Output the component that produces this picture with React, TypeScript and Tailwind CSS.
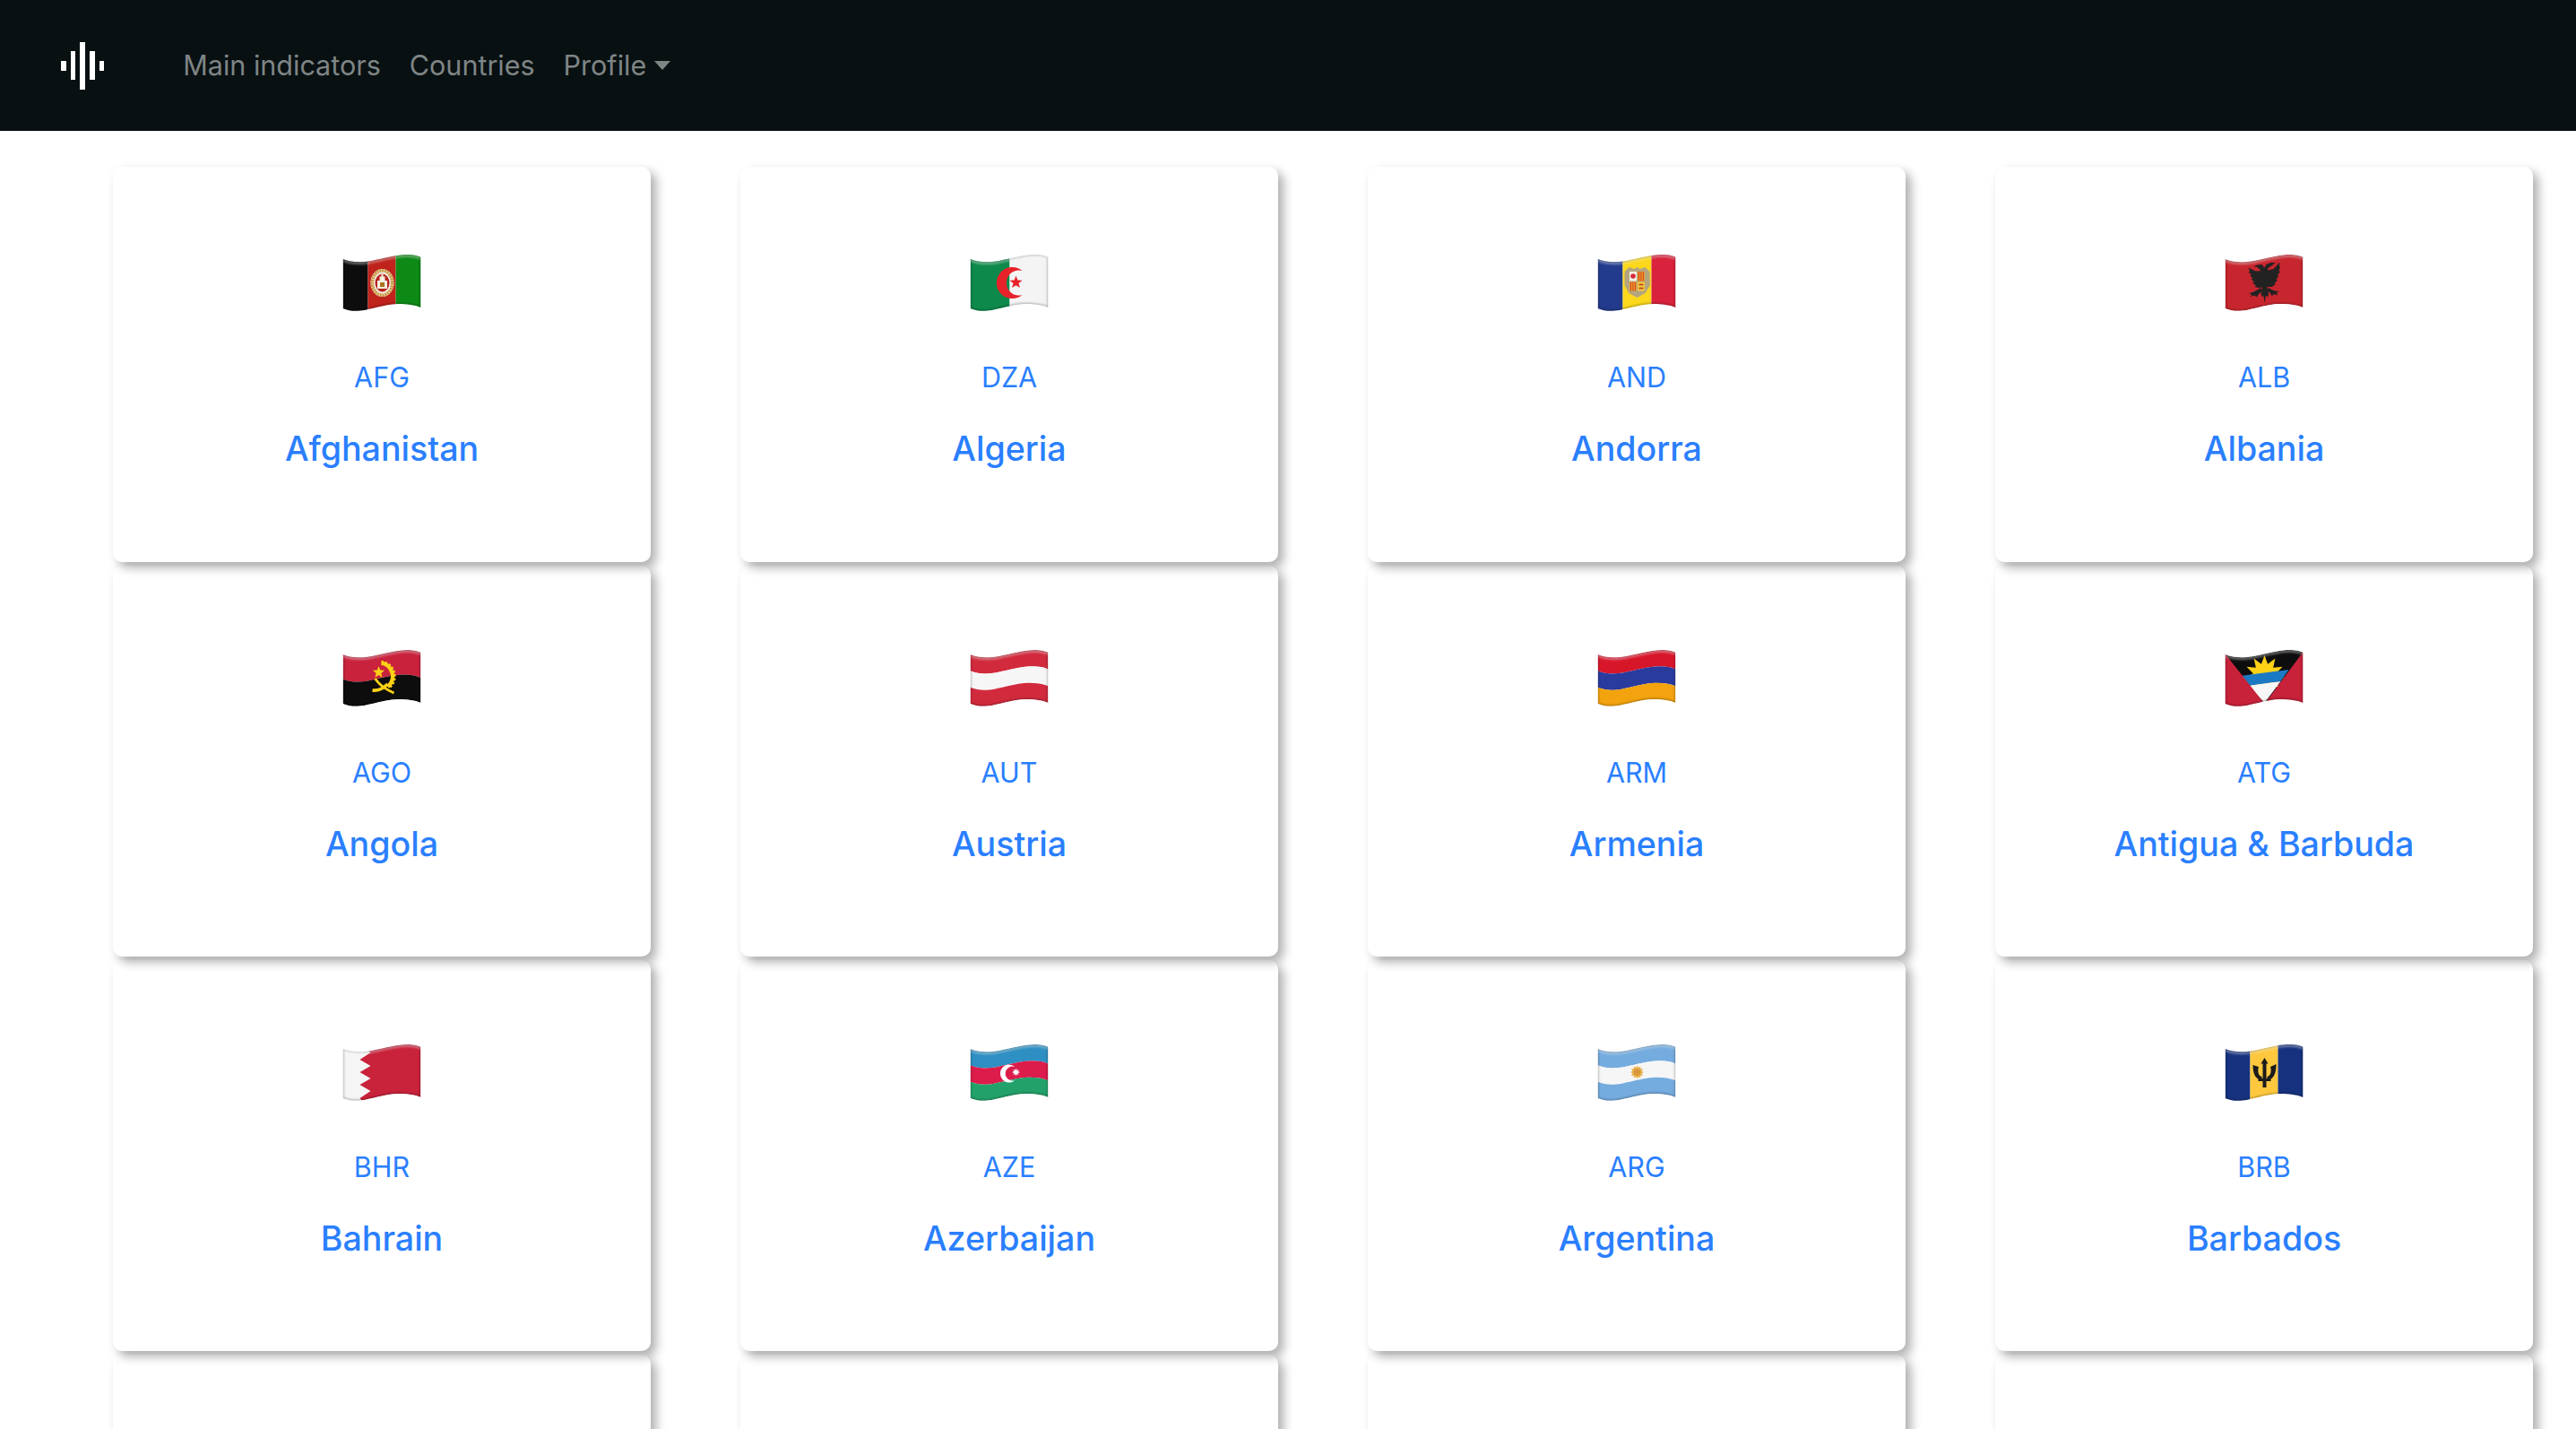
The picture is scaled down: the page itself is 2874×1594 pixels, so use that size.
import React from "react";

type P = [number, number];
const TOP: P[] = [[0,5],[10,9],[20,9],[32,7],[46,4],[60,0],[72,0],[78,0],[84,1],[87,3]];
const BOT: P[] = [[0,60],[8,63],[14,63.5],[24,62],[38,59],[50,55],[62,55],[72,55],[80,56],[87,59]];
const lerp = (t: number) => TOP.map((p, i) => [p[0] + (BOT[i][0] - p[0]) * t, p[1] + (BOT[i][1] - p[1]) * t] as P);
const fwd = (a: P[]) => `C${a[1]} ${a[2]} ${a[3]} C${a[4]} ${a[5]} ${a[6]} C${a[7]} ${a[8]} ${a[9]}`;
const band = (t0: number, t1: number) => {
  const a = lerp(t0);
  const b = lerp(t1).slice().reverse();
  return `M${a[0]} ${fwd(a)} L${b[0]} ${fwd(b)} Z`;
};
const OUTLINE = band(0, 1);

const star = (cx: number, cy: number, r: number, n = 5, inner = 0.42, rot = -90) => {
  const pts: string[] = [];
  for (let i = 0; i < n * 2; i++) {
    const rad = i % 2 ? r * inner : r;
    const a = ((rot + (i * 180) / n) * Math.PI) / 180;
    pts.push(`${(cx + rad * Math.cos(a)).toFixed(2)},${(cy + rad * Math.sin(a)).toFixed(2)}`);
  }
  return pts.join(" ");
};

const Bands = ({ colors, stops }: { colors: string[]; stops?: number[] }) => (
  <>
    {colors.map((c, i) => {
      const t0 = stops ? stops[i] : i / colors.length;
      const t1 = stops ? stops[i + 1] : (i + 1) / colors.length;
      return <path key={i} d={band(t0, t1)} fill={c} />;
    })}
  </>
);

const VBars = ({ bars }: { bars: [number, number, string][] }) => (
  <>
    {bars.map(([x, w, c], i) => (
      <rect key={i} x={x} y={-2} width={w} height={70} fill={c} />
    ))}
  </>
);

const art: Record<string, React.ReactNode> = {
  AFG: (
    <>
      <VBars bars={[[0, 28, "#0b0b0b"], [28, 31, "#c0201f"], [59, 30, "#0a8a12"]]} />
      <ellipse cx="44" cy="31.5" rx="13" ry="15.5" fill="#f3efe6" />
      <ellipse cx="44" cy="31.5" rx="11.2" ry="13.7" fill="none" stroke="#c9973f" strokeWidth="3.6" strokeDasharray="2.2 0.7" />
      <ellipse cx="44" cy="31.5" rx="8" ry="10" fill="#b8221f" />
      <path d="M38.5 38 V29 H41 V24.5 H43 V22 H45 V24.5 H47 V29 H49.5 V38 Z" fill="#f6efe2" />
      <path d="M41.5 31 H46.5 V36 H41.5 Z" fill="#a9741f" />
    </>
  ),
  DZA: (
    <>
      <VBars bars={[[0, 44, "#118a4b"], [44, 45, "#f4f4f4"]]} />
      <path d="M58 18 A17.5 17.5 0 1 0 58 45 A14 14 0 1 1 58 18Z" fill="#e8222a" />
      <polygon points={star(51, 31, 7.5)} fill="#e8222a" />
    </>
  ),
  AND: (
    <>
      <VBars bars={[[0, 28, "#223a8c"], [28, 32, "#fbd81e"], [60, 29, "#d9213a"]]} />
      <path d="M30 19 L35 14 L41 16 L44 14 L47 16 L53 14 L58 19 L58.5 34 L53 43 L44 48 L35 43 L30 34 Z" fill="#b3a57f" />
      <rect x="35.5" y="19" width="8" height="10.5" fill="#f5f1e6" />
      <circle cx="39.5" cy="24" r="2.8" fill="#d6293a" />
      <rect x="44.5" y="19" width="8" height="10.5" fill="#e9a125" />
      <path d="M46 19 V29.5 M48.4 19 V29.5 M50.8 19 V29.5" stroke="#d23a2c" strokeWidth="1" />
      <rect x="35.5" y="30.5" width="8" height="10" fill="#e9a125" />
      <path d="M37 30.5 V40.5 M39.4 30.5 V40.5 M41.8 30.5 V40.5" stroke="#d23a2c" strokeWidth="1" />
      <rect x="44.5" y="30.5" width="8" height="10" fill="#f1c83a" />
      <path d="M46 33.5 H51 M46 37.5 H51" stroke="#b8372c" strokeWidth="1.6" />
    </>
  ),
  ALB: (
    <>
      <path d={OUTLINE} fill="#c8262f" />
      <path
        d="M41 19 L36 14 L32 13.5 L36 11.5 L41 11 L44 14.5 L46 11 L51 9 L56 9 L52 12.5 L48 15 L47.5 20 L49 34 L46 38 L42 38 L39 34 Z"
        fill="#222"
      />
      <path
        d="M42 18 L34 18.5 L26 14.5 L27.5 18.5 L26 19.5 L29.5 22.5 L27.5 23.5 L31 26.5 L29 27.5 L32.5 30.5 L30.5 31.5 L34.5 34.5 L33 36 L38 37 L43 36 Z"
        fill="#222"
      />
      <path
        d="M46 18 L54 16 L61 8.5 L60.5 13 L61.5 14 L60 18 L61.5 19 L58.5 23 L60 24 L57 27.5 L58.5 28.5 L55 32 L56.5 33 L52 36 L46 36 Z"
        fill="#222"
      />
      <path d="M42 37 L40 43 L41 47 L43 46 L44 54 L45.5 46 L48 47 L48.5 43 L46.5 37 Z" fill="#222" />
      <path d="M40 37 L33 41 L26.5 43.5 L30 44.5 L28 47 L33 45.5 L35 47.5 L38 43.5 L42 40 Z M48 37 L54 40 L60.5 41.5 L57 43 L59 45.5 L54 44 L52.5 46.5 L50 42.5 L46 40 Z" fill="#222" />
    </>
  ),
  AGO: (
    <>
      <Bands colors={["#c9233c", "#0d0d0d"]} />
      <path d="M43 14.5 A 15 15 0 0 1 50 41" fill="none" stroke="#fcd116" strokeWidth="4.5" />
      <path d="M43 13 A 16.5 16.5 0 0 1 51.5 42.5" fill="none" stroke="#fcd116" strokeWidth="2.6" strokeDasharray="2.4 2" />
      <path d="M36 32 C40 38 48 44 57 48" fill="none" stroke="#fcd116" strokeWidth="2.8" />
      <path d="M33 45 C40 46 46 42 50 38" fill="none" stroke="#fcd116" strokeWidth="3.6" />
      <polygon points={star(40, 25, 7)} fill="#fcd116" />
    </>
  ),
  AUT: <Bands colors={["#d22a3d", "#f6f6f6", "#d22a3d"]} />,
  ARM: <Bands colors={["#d8152b", "#2a3a9e", "#f3a30f"]} />,
  ATG: (
    <>
      <path d={OUTLINE} fill="#0e0e0e" />
      <polygon points={star(44, 28, 22, 11, 0.58)} fill="#fcd116" />
      <polygon points="17,29 71,22 62,35 26,40" fill="#1a7ac4" />
      <polygon points="26,40 62,35 44,59" fill="#f7f7f7" />
      <polygon points="-1,3 44,60 24,66 -1,66" fill="#c8203a" />
      <polygon points="88,1 44,60 88,66" fill="#c8203a" />
    </>
  ),
  BHR: (
    <>
      <path d={OUTLINE} fill="#c9203a" />
      <path d="M-1 0 H19 L31 9 L19 17 L31 24 L19 31 L31 38 L19 45 L31 52 L19 60 L24 66 H-1 Z" fill="#f5f5f5" />
    </>
  ),
  AZE: (
    <>
      <Bands colors={["#2e8fc2", "#dc1c4b", "#21a26b"]} />
      <path d="M50 25 A10 10 0 1 0 50 40 A8 8 0 1 1 50 25Z" fill="#fff" />
      <polygon points={star(51, 31, 4.6, 8, 0.5)} fill="#fff" />
    </>
  ),
  ARG: (
    <>
      <Bands colors={["#74acdf", "#f6f6f6", "#74acdf"]} />
      <polygon points={star(44, 31, 7.5, 12, 0.7)} fill="#e8b04a" />
      <circle cx="44" cy="31" r="3.8" fill="#d9963a" />
    </>
  ),
  BRB: (
    <>
      <VBars bars={[[0, 28, "#13307f"], [28, 31, "#fdc83e"], [59, 30, "#13307f"]]} />
      <path d="M44 15 L48 21.5 H46 V48 H42 V21.5 H40 Z" fill="#1a1a1a" />
      <path d="M31 23 C31 33 34 39 41 40 V36 C37 35 36 30 37.5 25 Z M57 22 C57 33 54 39 47 40 V36 C51 35 52 30 50.5 25 Z" fill="#1a1a1a" />
      <rect x="37" y="38" width="14" height="3" fill="#1a1a1a" />
    </>
  ),
};

const Flag = ({ code }: { code: string }) => (
  <svg width="89" height="65" viewBox="0 0 88 65" className="block">
    <defs>
      <clipPath id={`c-${code}`}>
        <path d={OUTLINE} />
      </clipPath>
      <filter id={`b-${code}`} x="-10%" y="-10%" width="120%" height="120%">
        <feGaussianBlur stdDeviation="0.9" />
      </filter>
      <filter id={`s-${code}`} x="-5%" y="-5%" width="110%" height="110%">
        <feGaussianBlur stdDeviation="0.3" />
      </filter>
    </defs>
    <g clipPath={`url(#c-${code})`}>
      <g filter={`url(#s-${code})`}>{art[code]}</g>
      <path d={OUTLINE} fill="none" stroke="#000" strokeOpacity="0.28" strokeWidth="2.4" filter={`url(#b-${code})`} />
      <path d={band(0, 0.05)} fill="#fff" fillOpacity="0.4" filter={`url(#b-${code})`} />
    </g>
  </svg>
);

const countries = [
  ["AFG", "Afghanistan"],
  ["DZA", "Algeria"],
  ["AND", "Andorra"],
  ["ALB", "Albania"],
  ["AGO", "Angola"],
  ["AUT", "Austria"],
  ["ARM", "Armenia"],
  ["ATG", "Antigua & Barbuda"],
  ["BHR", "Bahrain"],
  ["AZE", "Azerbaijan"],
  ["ARG", "Argentina"],
  ["BRB", "Barbados"],
];

const Card = ({ code, name, first }: { code: string; name: string; first: boolean }) => (
  <div
    className={`flex flex-col items-center rounded-[10px] shadow-[6px_6px_12px_rgba(0,0,0,0.32)] ${
      first ? "h-[441px] pt-[98px]" : "h-[436px] pt-[94px]"
    }`}
  >
    <Flag code={code} />
    <div className="mt-[52px] text-[30.5px] leading-[40px] text-[#2a7fff]">{code}</div>
    <div className="mt-[36px] text-[37.6px] font-[450] leading-[48px] text-[#2a7fff]">{name}</div>
  </div>
);

const bars = ["h-[11px]", "h-[32px]", "h-[53px]", "h-[32px]", "h-[11px]"];

export default function App() {
  return (
    <div className="h-screen overflow-hidden bg-white font-['Inter',sans-serif]">
      <nav className="flex h-[146px] items-center bg-[#081012] pl-[68px]">
        <div className="flex items-center gap-[5.2px]">
          {bars.map((h, i) => (
            <div key={i} className={`w-[5.5px] bg-white ${h}`} />
          ))}
        </div>
        <div className="ml-[88px] flex items-center gap-[32px] text-[30.5px] leading-[44px] text-[#7f8585]">
          <a>Main indicators</a>
          <a>Countries</a>
          <a className="flex items-center gap-[9px]">
            Profile
            <span className="block border-x-[9px] border-t-[10px] border-x-transparent border-t-[#7f8585]" />
          </a>
        </div>
      </nav>
      <main className="grid grid-cols-4 gap-x-[100px] gap-y-[4px] pl-[126px] pr-[48px] pt-[40px]">
        {countries.map(([code, name], i) => (
          <Card key={code} code={code} name={name} first={i < 4} />
        ))}
        <div className="h-[436px] rounded-[10px] shadow-[6px_6px_12px_rgba(0,0,0,0.32)]" />
        <div className="h-[436px] rounded-[10px] shadow-[6px_6px_12px_rgba(0,0,0,0.32)]" />
        <div className="h-[436px] rounded-[10px] shadow-[6px_6px_12px_rgba(0,0,0,0.32)]" />
        <div className="h-[436px] rounded-[10px] shadow-[6px_6px_12px_rgba(0,0,0,0.32)]" />
      </main>
    </div>
  );
}
